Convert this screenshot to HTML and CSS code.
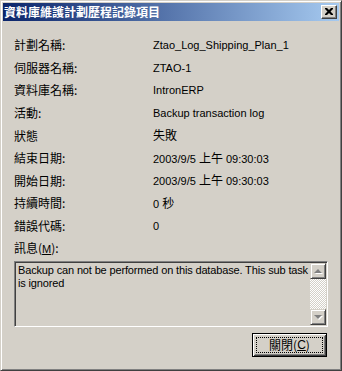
FILE: index.html
```html
<!DOCTYPE html>
<html lang="zh-Hant">
<head>
<meta charset="utf-8">
<title>資料庫維護計劃歷程記錄項目</title>
<link rel="stylesheet" href="styles.css">
</head>
<body>
<div class="window">
  <div class="titlebar">
    <span class="title">資料庫維護計劃歷程記錄項目</span>
    <span class="close" aria-label="close">
      <svg width="8" height="7" viewBox="0 0 8 7"><path d="M0 0h2l2 2 2-2h2v1L5.5 3.5 8 6v1H6L4 5 2 7H0V6l2.5-2.5L0 1z" fill="#000"/></svg>
    </span>
  </div>
  <div class="content">
    <div class="props">
      <div class="label">計劃名稱:</div><div class="value">Ztao_Log_Shipping_Plan_1</div>
      <div class="label">伺服器名稱:</div><div class="value">ZTAO-1</div>
      <div class="label">資料庫名稱:</div><div class="value">IntronERP</div>
      <div class="label">活動:</div><div class="value">Backup transaction log</div>
      <div class="label">狀態</div><div class="value"><span class="zh">失敗</span></div>
      <div class="label">結束日期:</div><div class="value">2003/9/5 <span class="zh">上午</span> 09:30:03</div>
      <div class="label">開始日期:</div><div class="value">2003/9/5 <span class="zh">上午</span> 09:30:03</div>
      <div class="label">持續時間:</div><div class="value">0 <span class="zh">秒</span></div>
      <div class="label">錯誤代碼:</div><div class="value">0</div>
      <div class="label msg-label">訊息(<u>M</u>):</div>
    </div>
    <div class="textbox">
      <div class="text">Backup can not be performed on this database. This sub task is ignored</div>
      <div class="scrollbar">
        <div class="sb-btn"><span class="arrow up"></span></div>
        <div class="sb-track"></div>
        <div class="sb-btn"><span class="arrow down"></span></div>
      </div>
    </div>
    <div class="actions">
      <button class="btn"><span class="focus">關閉(<u>C</u>)</span></button>
    </div>
  </div>
</div>
</body>
</html>
```

FILE: styles.css
```css
html, body {
  margin: 0;
  padding: 0;
  background: #d4d0c8;
}
body {
  font-family: "Liberation Sans", "Noto Sans CJK TC", sans-serif;
  font-size: 11px;
  color: #000;
}
.window {
  box-sizing: border-box;
  width: 342px;
  height: 371px;
  background: #d4d0c8;
  border: 1px solid;
  border-color: #d4d0c8 #404040 #404040 #d4d0c8;
  box-shadow: inset 1px 1px #fff, inset -1px -1px #808080;
  padding: 2px;
  display: flex;
  flex-direction: column;
}
.titlebar {
  height: 18px;
  flex: none;
  background: linear-gradient(to right, #0a246a, #a6caf0);
  display: flex;
  align-items: center;
  justify-content: space-between;
  padding: 0 2px 0 1px;
}
.title {
  color: #fff;
  font-family: "Noto Sans CJK TC", sans-serif;
  font-weight: bold;
  font-size: 12px;
  line-height: 18px;
}
.close {
  box-sizing: border-box;
  width: 16px;
  height: 14px;
  background: #d4d0c8;
  border: 1px solid;
  border-color: #fff #404040 #404040 #fff;
  box-shadow: inset -1px -1px #808080;
  display: flex;
  align-items: center;
  justify-content: center;
  padding: 0 1px 1px 0;
}
.content {
  flex: 1;
  padding: 13px 11px 0 11px;
  display: flex;
  flex-direction: column;
}
.props {
  display: grid;
  grid-template-columns: 139px 1fr;
  grid-auto-rows: 22.6px;
  align-items: center;
}
.label {
  font-family: "Noto Sans CJK TC", sans-serif;
  font-size: 12px;
  line-height: 14px;
}
.label u {
  font-family: "Liberation Sans", sans-serif;
  font-size: 11px;
}
.value {
  line-height: 14px;
}
.zh {
  font-family: "Noto Sans CJK TC", sans-serif;
  font-size: 12px;
}
.msg-label {
  grid-column: 1 / 3;
}
.textbox {
  box-sizing: border-box;
  margin-top: 1px;
  width: 314px;
  height: 66px;
  border: 1px solid;
  border-color: #808080 #fff #fff #808080;
  box-shadow: inset 1px 1px #404040, inset -1px -1px #d4d0c8;
  padding: 1px;
  display: flex;
}
.text {
  flex: 1;
  padding: 1px 0 0 2px;
  line-height: 13px;
  letter-spacing: -0.15px;
}
.scrollbar {
  width: 16px;
  flex: none;
  display: flex;
  flex-direction: column;
}
.sb-btn {
  box-sizing: border-box;
  height: 16px;
  flex: none;
  background: #d4d0c8;
  border: 1px solid;
  border-color: #d4d0c8 #404040 #404040 #d4d0c8;
  box-shadow: inset 1px 1px #fff, inset -1px -1px #808080;
  display: flex;
  align-items: center;
  justify-content: center;
}
.sb-track {
  flex: 1;
  background: repeating-conic-gradient(#fff 0 25%, #d4d0c8 0 50%) 0 0 / 2px 2px;
}
.arrow {
  width: 0;
  height: 0;
  border-left: 4px solid transparent;
  border-right: 4px solid transparent;
}
.arrow.up {
  border-bottom: 4px solid #808080;
  filter: drop-shadow(1px 1px 0 #fff);
}
.arrow.down {
  border-top: 4px solid #808080;
  filter: drop-shadow(1px 1px 0 #fff);
}
.actions {
  display: flex;
  justify-content: flex-end;
  padding-top: 6px;
  padding-right: 1px;
}
.btn {
  box-sizing: border-box;
  width: 75px;
  height: 24px;
  margin: 0;
  padding: 3px;
  background: #d4d0c8;
  border: 1px solid #000;
  box-shadow: inset 1px 1px #fff, inset -1px -1px #404040, inset 2px 2px #d4d0c8, inset -2px -2px #808080;
  font-family: "Noto Sans CJK TC", sans-serif;
  font-size: 12px;
  color: #000;
  display: flex;
}
.focus {
  flex: 1;
  border: 1px dotted #000;
  display: flex;
  align-items: center;
  justify-content: center;
  line-height: 14px;
}
.focus u {
  font-family: "Liberation Sans", sans-serif;
}
```
